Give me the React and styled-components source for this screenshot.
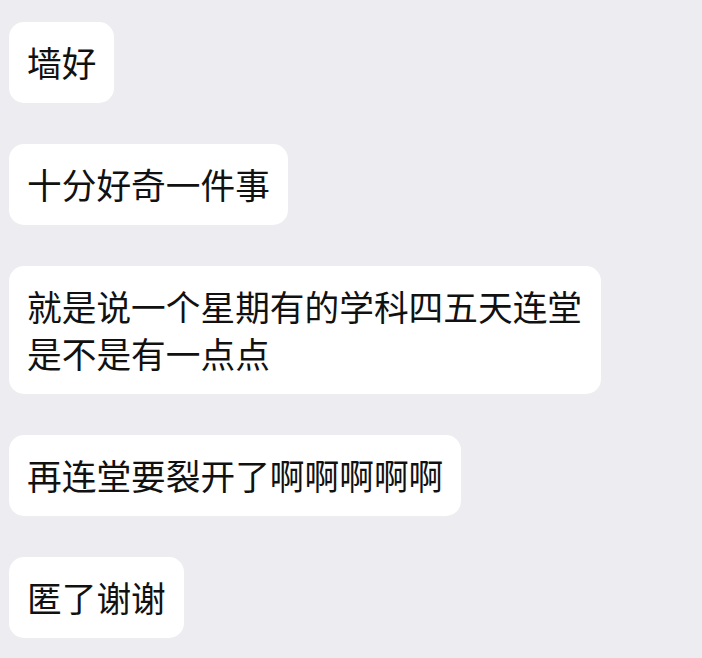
import React from 'react';
import styled, { createGlobalStyle } from 'styled-components';

const GlobalStyle = createGlobalStyle`
  html, body {
    margin: 0;
    padding: 0;
    background-color: #ececf1;
  }
`;

const Thread = styled.div`
  display: flex;
  flex-direction: column;
  align-items: flex-start;
  gap: 41px;
  padding: 22px 0 0 9px;
  min-height: 658px;
  box-sizing: border-box;
  background-color: #ececf1;
  font-family: "Noto Sans CJK SC", "Noto Sans", sans-serif;
`;

const Bubble = styled.div`
  background-color: #ffffff;
  border-radius: 15px;
  padding: 17px 18px;
  max-width: 592px;
  box-sizing: border-box;
  color: #111111;
  font-size: 34.7px;
  line-height: 47px;
  letter-spacing: 0;
`;

const messages = [
  '墙好',
  '十分好奇一件事',
  '就是说一个星期有的学科四五天连堂是不是有一点点',
  '再连堂要裂开了啊啊啊啊啊',
  '匿了谢谢',
];

const App = () => {
  return (
    <>
      <GlobalStyle />
      <Thread>
        {messages.map((text, i) => (
          <Bubble key={i}>{text}</Bubble>
        ))}
      </Thread>
    </>
  );
};

export default App;
